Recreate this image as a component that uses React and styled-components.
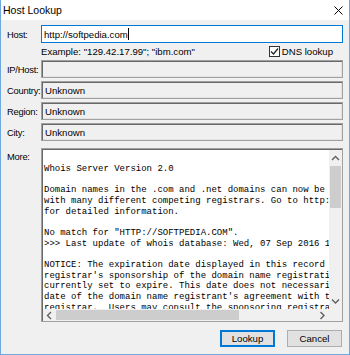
import React from 'react';
import styled, { createGlobalStyle } from 'styled-components';

const GlobalStyle = createGlobalStyle`
	html, body {
		margin: 0;
		padding: 0;
		background: #ffffff;
	}
	body {
		font-family: 'Liberation Sans', Arial, sans-serif;
		font-size: 9.6px;
		color: #000;
	}
`;

// Styles
const Window = styled.div`
	width: 350px;
	height: 355px;
	box-sizing: border-box;
	border: 1px solid #6fa8dc;
	border-top: none;
	background: #f0f0f0;
	display: flex;
	flex-direction: column;
`;

const TitleBar = styled.div`
	height: 20px;
	background: #ffffff;
	display: flex;
	align-items: center;
	justify-content: space-between;
	padding: 0 6px 0 2px;
	font-size: 10.5px;
	color: #000;
`;

const Body = styled.div`
	flex: 1;
	display: flex;
	flex-direction: column;
	padding: 5px 6px 0 6px;
`;

const Row = styled.div`
	display: grid;
	grid-template-columns: 34px 1fr;
	align-items: ${(p) => (p.$top ? 'start' : 'center')};
	margin-top: ${(p) => p.$mt || 0}px;
	height: ${(p) => p.$h || 18}px;
`;

const Label = styled.div`
	font-size: 9.4px;
	letter-spacing: -0.25px;
	padding-top: ${(p) => (p.$top ? 3 : 0)}px;
	white-space: nowrap;
`;

const Input = styled.div`
	height: 18px;
	box-sizing: border-box;
	border: 1px solid #0078d7;
	background: #fff;
	display: flex;
	align-items: center;
	padding-left: 2px;
	font-size: 9.6px;
`;

const Caret = styled.span`
	display: inline-block;
	width: 1px;
	height: 12px;
	background: #000;
`;

const Field = styled.div`
	height: 18px;
	box-sizing: border-box;
	border: 1px solid #a0a0a0;
	box-shadow: inset 1px 1px 0 #696969, inset -1px -1px 0 #e3e3e3;
	background: #f0f0f0;
	display: flex;
	align-items: center;
	padding-left: 3px;
	font-size: 9.6px;
`;

const HintLine = styled.div`
	display: flex;
	align-items: center;
	justify-content: space-between;
	padding-right: 10px;
	font-size: 9.6px;
`;

const Check = styled.label`
	display: flex;
	align-items: center;
	gap: 2px;
`;

const Box = styled.span`
	width: 11px;
	height: 11px;
	box-sizing: border-box;
	border: 1px solid #333;
	background: #fff;
	display: flex;
	align-items: center;
	justify-content: center;
`;

const Memo = styled.div`
	height: 174px;
	box-sizing: border-box;
	border: 1px solid #a0a0a0;
	box-shadow: inset 1px 1px 0 #696969;
	background: #fff;
	display: grid;
	grid-template-columns: 1fr 13px;
	grid-template-rows: 1fr 12px;
	padding: 1px 0 0 1px;
`;

const MemoText = styled.pre`
	margin: 0;
	padding: 3px 0 0 1px;
	overflow: hidden;
	font-family: 'Liberation Mono', 'Courier New', monospace;
	font-size: 9px;
	line-height: 10.7px;
	color: #000;
	white-space: pre;
`;

const VScroll = styled.div`
	background: #f0f0f0;
	display: flex;
	flex-direction: column;
`;

const HScroll = styled.div`
	background: #f0f0f0;
	display: flex;
	align-items: center;
`;

const Arrow = styled.div`
	width: 13px;
	height: ${(p) => (p.$h ? 12 : 16)}px;
	display: flex;
	align-items: center;
	justify-content: center;
	flex: none;
`;

const VTrack = styled.div`
	flex: 1;
	display: flex;
	flex-direction: column;
`;

const VThumb = styled.div`
	height: 42px;
	margin: 0 1px;
	background: #cdcdcd;
`;

const HTrack = styled.div`
	flex: 1;
	height: 100%;
	display: flex;
	align-items: center;
`;

const HThumb = styled.div`
	width: 183px;
	height: 10px;
	background: #cdcdcd;
`;

const Corner = styled.div`
	background: #f0f0f0;
`;

const Buttons = styled.div`
	display: flex;
	justify-content: flex-end;
	gap: 12px;
	margin-top: 8px;
	padding-right: 1px;
`;

const Button = styled.button`
	width: 55px;
	height: 17px;
	box-sizing: border-box;
	padding: 0;
	font-family: 'Liberation Sans', Arial, sans-serif;
	font-size: 9.6px;
	color: #000;
	background: #e1e1e1;
	border: 1px solid ${(p) => (p.$default ? '#0078d7' : '#adadad')};
	box-shadow: ${(p) => (p.$default ? 'inset 0 0 0 1px #0078d7' : 'none')};
`;

const whois = `
Whois Server Version 2.0

Domain names in the .com and .net domains can now be registered
with many different competing registrars. Go to http://www.internic.net
for detailed information.

No match for "HTTP://SOFTPEDIA.COM".
>>> Last update of whois database: Wed, 07 Sep 2016 12:31:08 GMT <<<

NOTICE: The expiration date displayed in this record is the date the
registrar's sponsorship of the domain name registration in the registry is
currently set to expire. This date does not necessarily reflect the expiration
date of the domain name registrant's agreement with the sponsoring
registrar.  Users may consult the sponsoring registrar's Whois database to`;

function Chevron({ dir }) {
	const d = {
		up: 'M1 5 L4.5 1.5 L8 5',
		down: 'M1 1.5 L4.5 5 L8 1.5',
		left: 'M5 1 L1.5 4.5 L5 8',
		right: 'M1.5 1 L5 4.5 L1.5 8',
	}[dir];
	const horiz = dir === 'left' || dir === 'right';
	return (
		<svg width={horiz ? 7 : 9} height={horiz ? 9 : 7} viewBox={horiz ? '0 0 7 9' : '0 0 9 7'}>
			<path d={d} fill="none" stroke="#606060" strokeWidth="1.4" />
		</svg>
	);
}

export default function App() {
	return (
		<React.Fragment>
			<GlobalStyle />
			<Window>
				<TitleBar>
					<span>Host Lookup</span>
					<svg width="9" height="9" viewBox="0 0 9 9">
						<path d="M0.5 0.5 L8.5 8.5 M8.5 0.5 L0.5 8.5" stroke="#000" strokeWidth="1" />
					</svg>
				</TitleBar>
				<Body>
					<Row>
						<Label>Host:</Label>
						<Input>
							http://softpedia.com
							<Caret />
						</Input>
					</Row>
					<Row $h={17}>
						<span />
						<HintLine>
							<span>Example: "129.42.17.99"; "ibm.com"</span>
							<Check>
								<Box>
									<svg width="9" height="9" viewBox="0 0 9 9">
										<path d="M1 4.5 L3.5 7 L8 1.5" fill="none" stroke="#222" strokeWidth="1.2" />
									</svg>
								</Box>
								DNS lookup
							</Check>
						</HintLine>
					</Row>
					<Row>
						<Label>IP/Host:</Label>
						<Field />
					</Row>
					<Row $mt={3}>
						<Label>Country:</Label>
						<Field>Unknown</Field>
					</Row>
					<Row $mt={3}>
						<Label>Region:</Label>
						<Field>Unknown</Field>
					</Row>
					<Row $mt={3}>
						<Label>City:</Label>
						<Field>Unknown</Field>
					</Row>
					<Row $mt={7} $h={174} $top>
						<Label $top>More:</Label>
						<Memo>
							<MemoText>{whois}</MemoText>
							<VScroll>
								<Arrow>
									<Chevron dir="up" />
								</Arrow>
								<VTrack>
									<VThumb />
								</VTrack>
								<Arrow>
									<Chevron dir="down" />
								</Arrow>
							</VScroll>
							<HScroll>
								<Arrow $h>
									<Chevron dir="left" />
								</Arrow>
								<HTrack>
									<HThumb />
								</HTrack>
								<Arrow $h>
									<Chevron dir="right" />
								</Arrow>
							</HScroll>
							<Corner />
						</Memo>
					</Row>
					<Buttons>
						<Button $default>Lookup</Button>
						<Button>Cancel</Button>
					</Buttons>
				</Body>
			</Window>
		</React.Fragment>
	);
}
